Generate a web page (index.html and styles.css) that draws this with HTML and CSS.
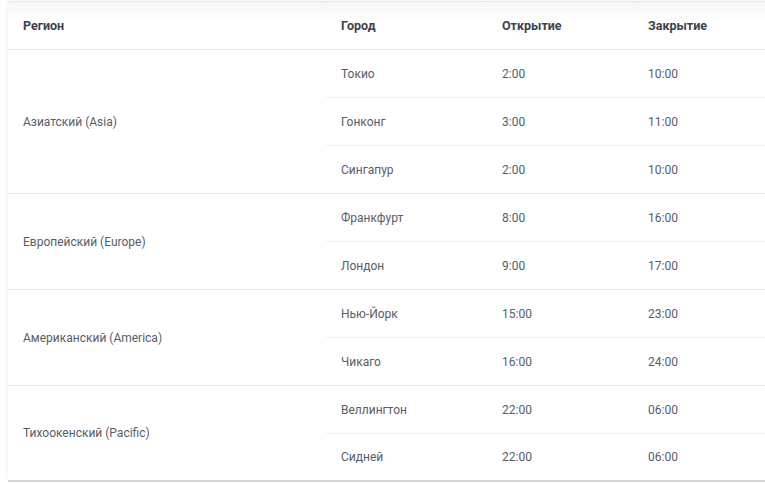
FILE: index.html
```html
<!DOCTYPE html>
<html lang="ru">
<head>
  <meta charset="UTF-8">
  <title>Торговые сессии</title>
  <link rel="stylesheet" href="styles.css">
</head>
<body>
  <div class="page">
    <div class="card">
      <table class="sessions">
        <colgroup>
          <col class="col-region">
          <col class="col-city">
          <col class="col-open">
          <col>
        </colgroup>
        <thead>
          <tr>
            <th>Регион</th>
            <th>Город</th>
            <th>Открытие</th>
            <th>Закрытие</th>
          </tr>
        </thead>
        <tbody>
          <tr class="group-start">
            <td rowspan="3" class="region">Азиатский (Asia)</td>
            <td>Токио</td><td>2:00</td><td>10:00</td>
          </tr>
          <tr><td>Гонконг</td><td>3:00</td><td>11:00</td></tr>
          <tr class="group-end"><td>Сингапур</td><td>2:00</td><td>10:00</td></tr>

          <tr class="group-start">
            <td rowspan="2" class="region">Европейский (Europe)</td>
            <td>Франкфурт</td><td>8:00</td><td>16:00</td>
          </tr>
          <tr class="group-end"><td>Лондон</td><td>9:00</td><td>17:00</td></tr>

          <tr class="group-start">
            <td rowspan="2" class="region">Американский (America)</td>
            <td>Нью-Йорк</td><td>15:00</td><td>23:00</td>
          </tr>
          <tr class="group-end"><td>Чикаго</td><td>16:00</td><td>24:00</td></tr>

          <tr class="group-start">
            <td rowspan="2" class="region last-region">Тихоокенский (Pacific)</td>
            <td>Веллингтон</td><td>22:00</td><td>06:00</td>
          </tr>
          <tr class="group-end last"><td>Сидней</td><td>22:00</td><td>06:00</td></tr>
        </tbody>
      </table>
    </div>
  </div>
</body>
</html>
```

FILE: styles.css
```css
html, body {
  margin: 0;
  background: #fff;
  overflow: hidden;
}

body {
  font-family: Roboto, "Liberation Sans", Arial, sans-serif;
}

.page {
  padding: 2px 0 0 8px;
}

.card {
  width: 780px;
  background: #fff;
  border-bottom: 2px solid #d2d2d2;
  box-shadow: 0 0 8px rgba(0,0,0,0.05), 0 -1px 1px rgba(0,0,0,0.08);
}

.sessions {
  width: 100%;
  border-collapse: collapse;
  font-size: 12px;
  color: #575d68;
}

.col-region { width: 318px; }
.col-city { width: 161px; }
.col-open { width: 146px; }

.sessions th {
  height: 47px;
  padding: 0 15px;
  text-align: left;
  font-size: 12.5px;
  font-weight: 700;
  color: #3b4250;
  border-bottom: 1px solid #ececec;
  background: linear-gradient(#f6f6f6, #fff 45%);
}

.sessions td {
  height: 47px;
  padding: 0 15px;
  vertical-align: middle;
  border-bottom: 1px solid #f0f0f0;
}

.sessions td.region,
.sessions tr.group-end td {
  border-bottom: 1px solid #ececec;
}

.sessions tr.last td,
.sessions td.last-region {
  border-bottom: none;
}

.sessions tr.last td {
  height: 46px;
}
```
